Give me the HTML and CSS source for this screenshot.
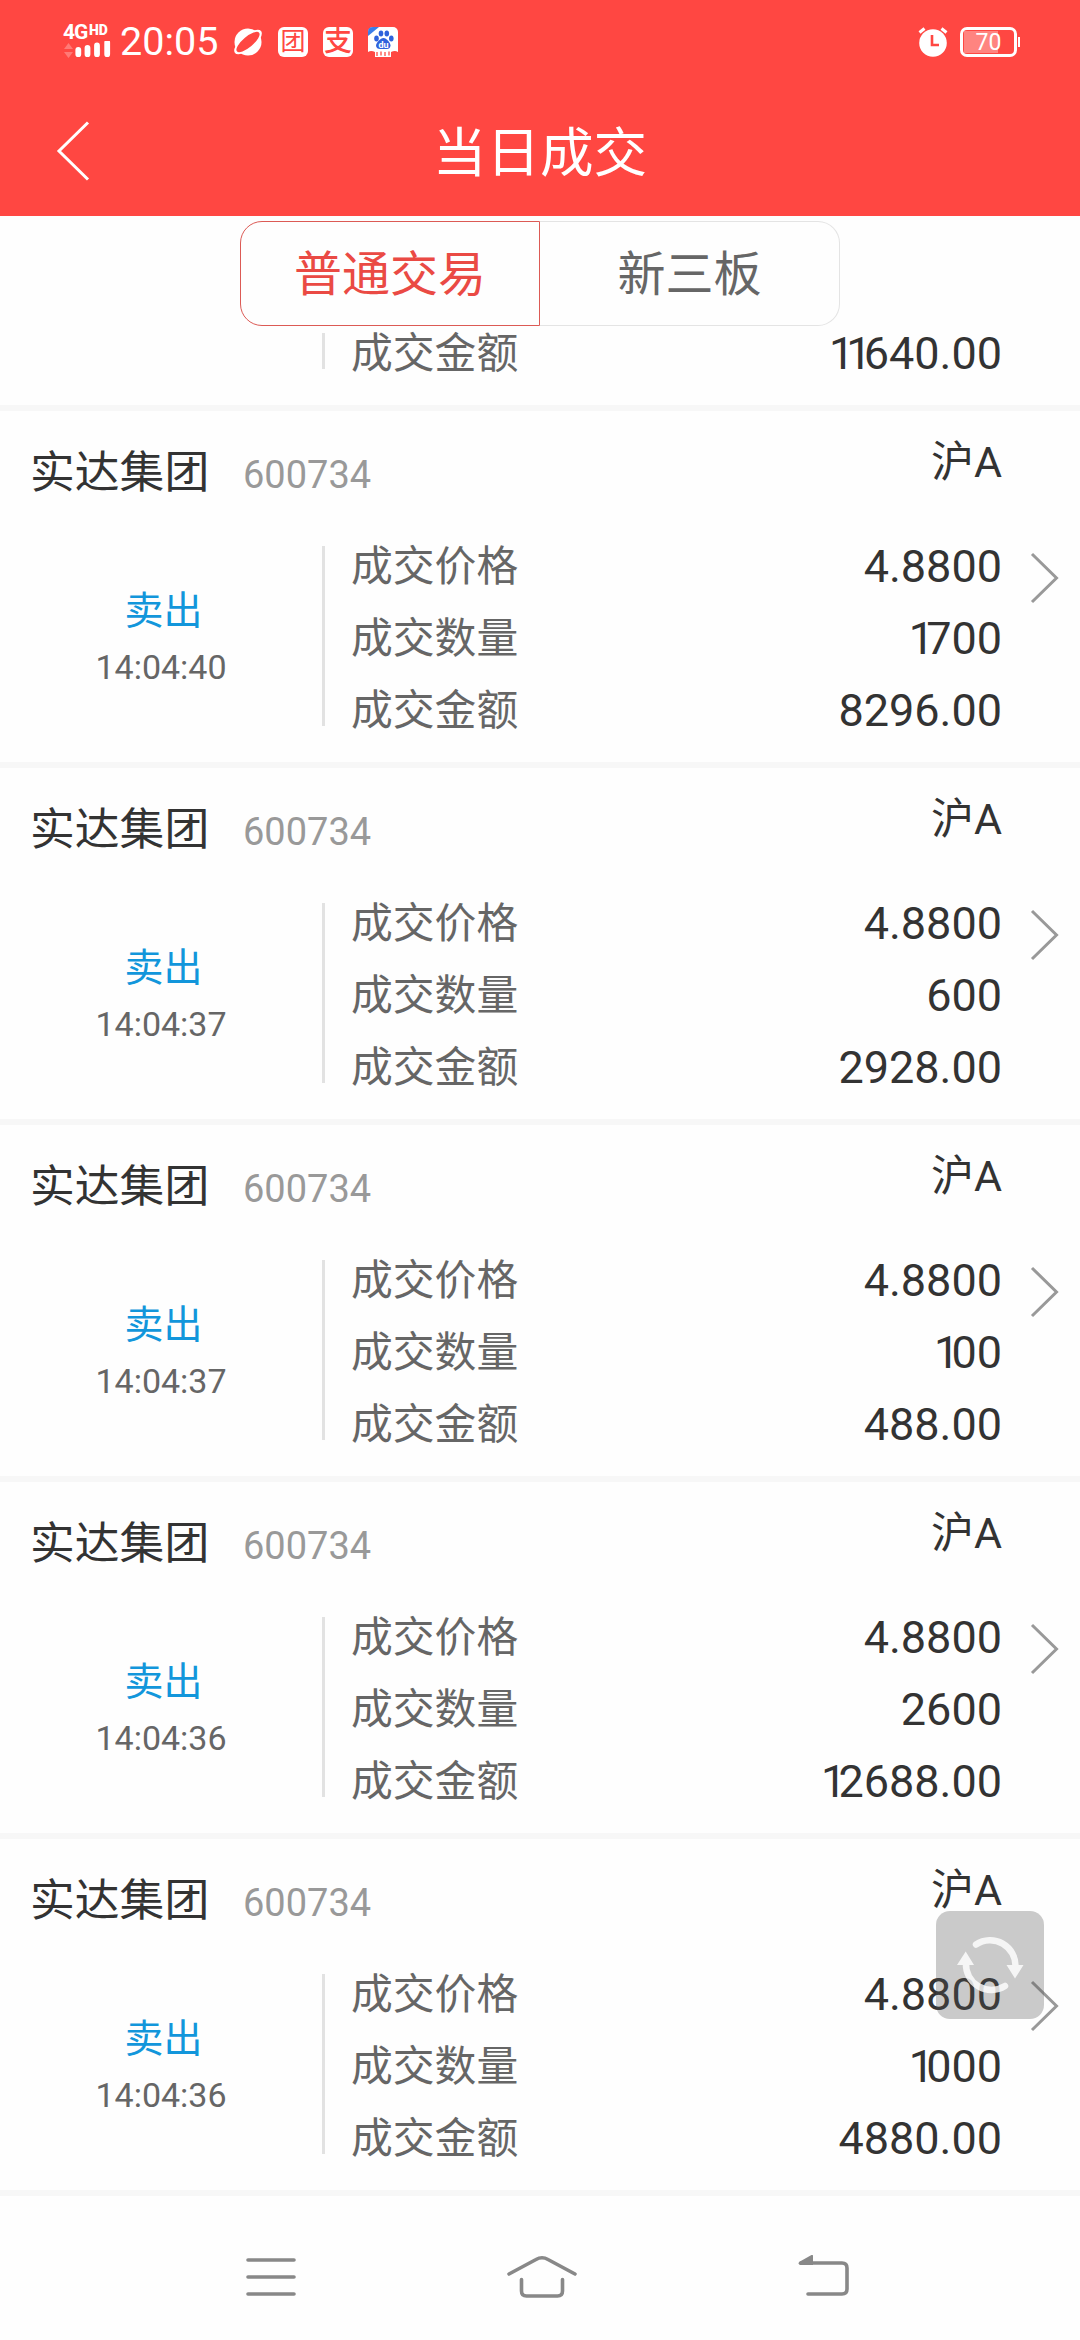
FILE: index.html
```html
<!DOCTYPE html>
<html lang="zh-CN">

<head>
  <meta charset="UTF-8">
  <meta name="viewport" content="width=device-width, initial-scale=1.0">
  <title>当日成交</title>
  <link rel="stylesheet" href="styles.css">
</head>

<body>
  <div class="status-bar">
    <div class="network">
      <div class="net-type"><b>4G</b><i>HD</i></div>
      <svg class="signal" width="48" height="19" viewBox="0 0 48 19">
        <path d="M1 8l4.500-6 4.500 6zM1 11l4.500 6 4.500-6z" fill="#ff7a76" />
        <path d="M15.300 8.800v4.400M24.500 7v6.200M34 4.500v8.700M44.200 1.500v11.700" stroke="#fff" stroke-width="5.800" stroke-linecap="round" />
      </svg>
    </div>
    <span class="clock">20:05</span>
    <div class="apps">
      <svg width="30" height="30" viewBox="0 0 30 30">
        <circle cx="15" cy="15" r="13.500" fill="#fff" />
        <ellipse cx="15" cy="15" rx="17" ry="7" transform="rotate(-40 15 15)" fill="#fff" />
        <ellipse cx="15" cy="15" rx="14.500" ry="5.200" transform="rotate(-40 15 15)" fill="#ff4742" />
      </svg>
      <span class="app app-tuan">团</span>
      <span class="app app-zhi">支</span>
      <svg width="30" height="30" viewBox="0 0 30 30">
        <rect width="30" height="30" rx="5" fill="#fff" />
        <path d="M0 9V5q0-5 5-5h6z" fill="#3b7de8" />
        <g fill="#2f62dc">
          <ellipse cx="8.500" cy="11.500" rx="2.300" ry="3" />
          <ellipse cx="13" cy="6.500" rx="2.300" ry="3" />
          <ellipse cx="18.800" cy="6.500" rx="2.300" ry="3" />
          <ellipse cx="23.300" cy="11.500" rx="2.300" ry="3" />
          <path d="M15.500 11c3 0 7 5 7 7.500s-2 3.500-3.500 3.500h-7c-2 0-4-1-4-3.500s4.500-7.500 7.500-7.500z" />
        </g>
        <path d="M0 25q3-2 7 0v5H0zM23 25q4-2 7 0v5h-7z" fill="#ff4742" />
        <path d="M8 25h2v4H8zM12 24.500h2v4h-2zM16 25h2v4h-2zM20 24.500h2v4h-2z" fill="#ff8a84" />
        <text x="15.500" y="20.500" class="du">du</text>
      </svg>
    </div>
    <svg class="alarm" width="30" height="30" viewBox="0 0 30 30">
      <circle cx="15" cy="16" r="13.800" fill="#fff" />
      <path d="M1.500 5.500l5-4M23.500 1.500l5 4" stroke="#fff" stroke-width="3" />
      <path d="M14 8v10h7" fill="none" stroke="#ff4742" stroke-width="2.600" />
    </svg>
    <div class="battery"><span>70</span></div>
  </div>

  <div class="title-bar">
    <svg class="back" width="34" height="60" viewBox="0 0 34 60">
      <path d="M32 1.500L3 30l29 28.500" />
    </svg>
    <h1>当日成交</h1>
  </div>

  <div class="tabs">
    <div class="tab tab-active">普通交易</div>
    <div class="tab">新三板</div>
  </div>

  <div class="trade-list" id="trade-list">
    <div class="trade trade-last">
      <div class="detail">
        <div class="row"><span>成交金额</span><em><b>11</b>640.00</em></div>
      </div>
    </div>
  </div>

  <div class="refresh">
    <svg width="108" height="108" viewBox="0 0 108 108">
      <path d="M40 33.500A25.500 25.500 0 0 1 79.500 56" />
      <path d="M69 75A25.500 25.500 0 0 1 30 52" />
      <path class="head" d="M70.500 54h17L79 67.500zM21 54h17L29.700 40.500z" />
    </svg>
  </div>

  <div class="nav-bar">
    <svg width="50" height="44" viewBox="0 0 50 44">
      <path d="M2 5h46M2 22h46M2 39h46" />
    </svg>
    <svg class="home" width="70" height="44" viewBox="0 0 70 44">
      <path d="M2 19L29 4.500q6-3.500 12 0L68 19M14.500 24.500V36q0 5 5 5h31q5 0 5-5V24.500" />
    </svg>
    <svg width="52" height="44" viewBox="0 0 52 44">
      <path d="M3 8h41q5 0 5 5v21q0 5-5 5H10" />
      <path class="solid" d="M1 7L13.500 0q1.500-.5 1.500 1v9H2q-2-1-1-3z" />
    </svg>
  </div>

  <script>
    const trades = [
      ['14:04:40', '4.8800', '1700', '8296.00'],
      ['14:04:37', '4.8800', '600', '2928.00'],
      ['14:04:37', '4.8800', '100', '488.00'],
      ['14:04:36', '4.8800', '2600', '12688.00'],
      ['14:04:36', '4.8800', '1000', '4880.00']
    ];

    let list = document.getElementById('trade-list');

    // the digit 1 is set narrower than the others
    function num(n) {
      return n.replace(/1/g, '<b>1</b>');
    }

    trades.forEach(function (t) {
      list.innerHTML += `
        <div class="trade">
          <div class="head-row">
            <span class="name">实达集团</span>
            <span class="code">600734</span>
            <span class="market">沪A</span>
          </div>
          <div class="body-row">
            <div class="side">
              <div class="action">卖出</div>
              <div class="time">${t[0]}</div>
            </div>
            <div class="detail">
              <div class="row"><span>成交价格</span><em>${num(t[1])}</em></div>
              <div class="row"><span>成交数量</span><em>${num(t[2])}</em></div>
              <div class="row"><span>成交金额</span><em>${num(t[3])}</em></div>
            </div>
            <svg class="arrow" width="30" height="52" viewBox="0 0 30 52">
              <path d="M2 2l24.500 24L2 50" />
            </svg>
          </div>
        </div>`;
    });
  </script>
</body>

</html>
```
FILE: styles.css
```css
* {
  margin: 0;
  padding: 0;
  box-sizing: border-box;
}

body {
  width: 1080px;
  height: 2340px;
  overflow: hidden;
  display: flex;
  flex-direction: column;
  background: #fefefe;
  color: #333;
  font-family: Roboto, "Noto Sans CJK SC", sans-serif;
}

em,
i {
  font-style: normal;
}

svg {
  display: block;
  flex: none;
}

/* status bar */
.status-bar {
  display: flex;
  align-items: center;
  height: 84px;
  padding: 0 63px 0 63px;
  background: #ff4742;
  color: #fff;
}

.network {
  width: 57px;
  height: 36px;
}

.net-type {
  display: flex;
  height: 17px;
  line-height: 17px;
}

.net-type b {
  width: 26px;
  font-size: 21px;
  letter-spacing: -1px;
}

.net-type i {
  font-size: 14px;
  font-weight: 900;
  line-height: 12px;
}

.clock {
  width: 113px;
  font-size: 39.500px;
  line-height: 84px;
}

.apps {
  display: flex;
  gap: 15px;
  flex: 1;
}

.app {
  width: 30px;
  height: 30px;
  border-radius: 6px;
  background: #fff;
  color: #ff4742;
  text-align: center;
  font-size: 25px;
  line-height: 29px;
}

.app-zhi {
  font-size: 28px;
  font-weight: 500;
}

.du {
  fill: #fff;
  font-size: 9px;
  font-weight: bold;
  text-anchor: middle;
}

.alarm {
  margin-right: 12px;
}

.battery {
  position: relative;
  width: 57px;
  height: 30px;
  border: 3px solid #fff;
  border-radius: 7px;
  background: linear-gradient(to right, #ff8480 34px, #ff4742 34px) 1px 1px / 49px 22px no-repeat;
  text-align: center;
  font-size: 23px;
  line-height: 25px;
}

.battery::after {
  content: "";
  position: absolute;
  right: -6px;
  top: 7px;
  width: 2px;
  height: 10px;
  background: #fff;
}

/* title */
.title-bar {
  display: flex;
  align-items: center;
  height: 132px;
  padding: 2px 56px 0;
  background: #ff4742;
  color: #fff;
}

.title-bar h1 {
  flex: 1;
  margin-right: 34px;
  padding-top: 5px;
  text-align: center;
  font-size: 53.600px;
  font-weight: 400;
  line-height: 125px;
}

.back path {
  fill: none;
  stroke: #fff;
  stroke-width: 3;
}

/* tabs */
.tabs {
  display: flex;
  height: 117px;
  padding: 5px 240px 7px;
}

.tab {
  width: 300px;
  height: 105px;
  border: 1px solid #e4e4e4;
  border-left: none;
  border-radius: 0 22px 22px 0;
  color: #666;
  text-align: center;
  font-size: 48px;
  line-height: 106px;
}

.tab-active {
  border: 1px solid #dc5a55;
  border-radius: 22px 0 0 22px;
  color: #ea4a44;
}

/* trades */
.trade-list {
  height: 1863px;
}

.trade {
  height: 357px;
  border-bottom: 6px solid #f7f7f7;
}

.head-row {
  display: flex;
  height: 135px;
  padding: 0 78px 0 30px;
}

.name {
  width: 213px;
  font-size: 44.800px;
  line-height: 123px;
}

.code {
  flex: 1;
  color: #999;
  font-size: 38px;
  line-height: 128px;
}

.market {
  font-size: 43px;
  line-height: 102px;
}

.body-row {
  display: flex;
  height: 180px;
}

.side {
  width: 322px;
  padding-top: 40px;
  text-align: center;
}

.action {
  padding-left: 5px;
  color: #1296db;
  font-size: 39px;
  line-height: 51px;
}

.time {
  color: #666;
  font-size: 34px;
  line-height: 61px;
}

.detail {
  display: flex;
  flex-direction: column;
  justify-content: space-between;
  width: 680px;
  border-left: 3px solid #e2e2e2;
}

.row {
  display: flex;
  justify-content: space-between;
  height: 36px;
  padding-left: 26px;
  line-height: 41px;
}

.row span {
  color: #666;
  font-size: 41.800px;
}

.row em {
  font-size: 45px;
}

.row b {
  font-weight: 400;
  letter-spacing: -8px;
}

.arrow {
  margin: 6px 0 0 28px;
}

.arrow path {
  fill: none;
  stroke: #999;
  stroke-width: 3;
}

/* record scrolled under the tabs */
.trade-last {
  height: 78px;
  padding-left: 322px;
}

.refresh {
  position: absolute;
  left: 936px;
  top: 1911px;
  border-radius: 14px;
  background: rgba(82, 82, 82, 0.3);
}

.refresh path {
  fill: none;
  stroke: rgba(255, 255, 255, 0.8);
  stroke-width: 6.500;
  stroke-linecap: round;
}

.refresh .head {
  fill: #f5f5f5;
  stroke: none;
}

/* system navigation */
.nav-bar {
  display: flex;
  justify-content: space-between;
  padding: 59px 230px 0 246px;
}

.nav-bar path {
  fill: none;
  stroke: #888;
  stroke-width: 3.600;
  stroke-linecap: round;
}

.nav-bar .home {
  margin-right: 11px;
}

.nav-bar .solid {
  fill: #888;
  stroke: none;
}
```
